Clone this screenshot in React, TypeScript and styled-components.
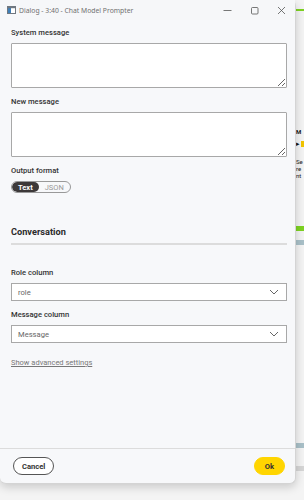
import styled, { createGlobalStyle } from 'styled-components';

const GlobalStyle = createGlobalStyle`
  html, body {
    margin: 0;
    padding: 0;
  }
  body {
    width: 304px;
    height: 500px;
    overflow: hidden;
    font-family: Roboto, "Liberation Sans", sans-serif;
  }
`;

function WindowIcon() {
  return (
    <svg width="9" height="8" viewBox="0 0 9 8">
      <rect x="0.5" y="0.5" width="8" height="7" fill="#fff" stroke="#6f7780" />
      <rect x="1" y="1" width="3" height="6" fill="#3e7fb8" />
      <rect x="1" y="1" width="7" height="1.2" fill="#6f7780" />
    </svg>
  );
}

function Chevron() {
  return (
    <svg width="10" height="6" viewBox="0 0 10 6">
      <path d="M1 1 L5 5 L9 1" fill="none" stroke="#666" strokeWidth="1" />
    </svg>
  );
}

function SelectField({ label, value }: { label: string; value: string }) {
  return (
    <Field>
      <Label>{label}</Label>
      <Select>
        <span>{value}</span>
        <Chevron />
      </Select>
    </Field>
  );
}

export default function App() {
  return (
    <Desktop>
      <GlobalStyle />
      {/* the app behind the dialog, only a thin strip of it shows */}
      <Backdrop>
        <BgTopLine />
        <BgText $top={117} $bold>M</BgText>
        <BgArrow>▸</BgArrow>
        <BgText $top={11}>Se</BgText>
        <BgText $top={0}>re</BgText>
        <BgText $top={0}>nt</BgText>
        <BgBar $color="#7dd321" $top={47} />
        <BgBar $color="#a9c0c8" $top={9} />
        <BgBar $color="#a9c0c8" $top={198} />
        <BgBar $color="#d6d6d6" $top={18} />
      </Backdrop>

      <Window>
        <TitleBar>
          <WindowIcon />
          <Title>Dialog - 3:40 - Chat Model Prompter</Title>
          <Controls>
            <Ctrl>
              <svg width="9" height="9" viewBox="0 0 9 9">
                <path d="M0.5 4.5 H8.5" stroke="#555" strokeWidth="0.8" />
              </svg>
            </Ctrl>
            <Ctrl>
              <svg width="9" height="9" viewBox="0 0 9 9">
                <rect x="1.5" y="1.5" width="6.5" height="6.5" rx="1" fill="none" stroke="#555" strokeWidth="0.8" />
              </svg>
            </Ctrl>
            <Ctrl>
              <svg width="9" height="9" viewBox="0 0 9 9">
                <path d="M1 1 L8 8 M8 1 L1 8" stroke="#555" strokeWidth="0.8" />
              </svg>
            </Ctrl>
          </Controls>
        </TitleBar>

        <Body>
          <Field>
            <Label>System message</Label>
            <TextArea />
          </Field>
          <Field>
            <Label>New message</Label>
            <TextArea />
          </Field>
          <Field>
            <Label>Output format</Label>
            <Toggle>
              <ToggleOption $active>Text</ToggleOption>
              <ToggleOption>JSON</ToggleOption>
            </Toggle>
          </Field>

          <Section>
            <SectionTitle>Conversation</SectionTitle>
          </Section>

          <SelectField label="Role column" value="role" />
          <SelectField label="Message column" value="Message" />

          <AdvancedLink>Show advanced settings</AdvancedLink>
        </Body>

        <Footer>
          <Button>Cancel</Button>
          <Button $primary>Ok</Button>
        </Footer>
      </Window>
    </Desktop>
  );
}

const Desktop = styled.div`
  position: relative;
  width: 304px;
  height: 500px;
  background: #eeeeee;
  overflow: hidden;
`;

const Backdrop = styled.div`
  display: flex;
  flex-direction: column;
  align-items: flex-end;
  height: 100%;
  background: #f4f4f4;
`;

const BgTopLine = styled.div`
  align-self: stretch;
  height: 2px;
  margin-top: 9px;
  background: #7dd321;
`;

const BgText = styled.div<{ $top: number; $bold?: boolean }>`
  margin-top: ${(p) => p.$top}px;
  width: 8px;
  font-size: 6px;
  line-height: 7px;
  font-weight: ${(p) => (p.$bold ? 700 : 400)};
  color: #222;
`;

const BgArrow = styled.div`
  width: 5px;
  height: 6px;
  margin-top: 6px;
  font-size: 7px;
  line-height: 6px;
  color: #111;
  border-right: 3px solid #f2c500;
`;

const BgBar = styled.div<{ $color: string; $top: number }>`
  width: 9px;
  height: 5px;
  margin-top: ${(p) => p.$top}px;
  background: ${(p) => p.$color};
`;

const Window = styled.div`
  position: absolute;
  left: 0;
  top: 0;
  width: 295px;
  height: 483px;
  display: flex;
  flex-direction: column;
  background: #f7f8fa;
  border: 1px solid #d4d4d4;
  border-top: none;
  border-left: none;
  border-radius: 0 6px 6px 6px;
  box-shadow: 0 3px 10px rgba(0, 0, 0, 0.18);
`;

const TitleBar = styled.div`
  height: 20px;
  display: flex;
  align-items: center;
  padding-left: 7px;
  background: #f6f7f9;
`;

const Title = styled.div`
  margin-left: 3px;
  font-family: "Noto Sans", "Open Sans", sans-serif;
  font-size: 6.8px;
  color: #707070;
  flex: 1;
`;

const Controls = styled.div`
  display: flex;
  height: 100%;
`;

const Ctrl = styled.div`
  width: 27px;
  display: flex;
  align-items: center;
  justify-content: center;
`;

const Body = styled.div`
  flex: 1;
  padding: 7px 8px 0 11px;
  display: flex;
  flex-direction: column;
`;

const Field = styled.div`
  display: flex;
  flex-direction: column;
  margin-bottom: 8px;
`;

const Label = styled.div`
  font-size: 7.6px;
  line-height: 12px;
  font-weight: 500;
  color: #333;
  margin-bottom: 4px;
`;

const TextArea = styled.textarea`
  box-sizing: border-box;
  width: 100%;
  height: 45px;
  margin: 0;
  border: 1px solid #a8a8a8;
  border-radius: 1px;
  background: #fff;
  resize: vertical;
  display: block;
`;

const Toggle = styled.div`
  display: flex;
  align-self: flex-start;
  height: 12px;
  border: 1px solid #999;
  border-radius: 7px;
  box-sizing: border-box;
  overflow: hidden;
`;

const ToggleOption = styled.div<{ $active?: boolean }>`
  display: flex;
  align-items: center;
  padding: 0 ${(p) => (p.$active ? 6 : 6)}px;
  font-size: 7.5px;
  font-weight: ${(p) => (p.$active ? 700 : 400)};
  color: ${(p) => (p.$active ? '#fff' : '#999')};
  background: ${(p) => (p.$active ? '#3d3939' : 'transparent')};
  border-radius: 7px;
`;

const Section = styled.div`
  margin-top: 24px;
  padding-bottom: 4px;
  border-bottom: 2px solid #dcdcdc;
  margin-bottom: 22px;
`;

const SectionTitle = styled.div`
  font-size: 9.2px;
  line-height: 14px;
  font-weight: 700;
  color: #2b2b2b;
`;

const Select = styled.div`
  box-sizing: border-box;
  height: 18px;
  display: flex;
  align-items: center;
  justify-content: space-between;
  padding: 0 7px 0 6px;
  background: #fff;
  border: 1px solid #a8a8a8;
  font-size: 7.6px;
  color: #666;
`;

const AdvancedLink = styled.div`
  margin-top: 6px;
  font-size: 7.5px;
  line-height: 12px;
  color: #777;
  text-decoration: underline;
`;

const Footer = styled.div`
  height: 34px;
  display: flex;
  align-items: center;
  justify-content: space-between;
  padding: 0 10px 0 13px;
  border-top: 1px solid #dcdcdc;
`;

const Button = styled.button<{ $primary?: boolean }>`
  height: 18px;
  padding: 0 ${(p) => (p.$primary ? 10 : 8)}px;
  border-radius: 9px;
  border: 1px solid ${(p) => (p.$primary ? '#ffd500' : '#555')};
  background: ${(p) => (p.$primary ? '#ffd500' : '#fff')};
  font-family: Roboto, "Liberation Sans", sans-serif;
  font-size: 7.6px;
  font-weight: 700;
  color: #333;
`;
